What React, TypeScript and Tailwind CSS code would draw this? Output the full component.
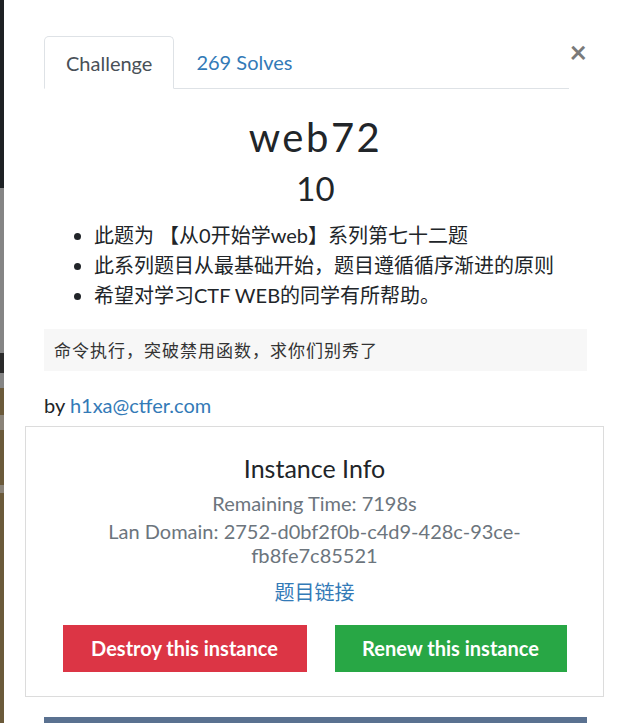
const lato = { fontFamily: 'Lato, "Noto Sans CJK SC", sans-serif' }

const bullets = [
  '此题为 【从0开始学web】系列第七十二题',
  '此系列题目从最基础开始，题目遵循循序渐进的原则',
  '希望对学习CTF WEB的同学有所帮助。',
]

export default function App() {
  return (
    <div className="flex w-[625px] h-[723px] overflow-hidden bg-white" style={lato}>
      {/* page behind the modal */}
      <div className="flex flex-col w-[4px] shrink-0">
        <div className="h-[188px] bg-[#1e2124]" />
        <div className="h-[165px] bg-[#858585]" />
        <div className="h-[20px] bg-[#2a2a2a]" />
        <div className="h-[15px] bg-[#858585]" />
        <div className="h-[27px] bg-[#6b5a3a]" />
        <div className="h-[15px] bg-[#8a8378]" />
        <div className="h-[55px] bg-[#6b5a3a]" />
        <div className="h-[8px] bg-[#8a8378]" />
        <div className="flex-1 bg-[#6b5a3a]" />
      </div>

      <div className="flex-1 flex flex-col pl-[40px] pr-[38px] pt-[36px] text-[#212529]">
        {/* tabs */}
        <div className="flex items-start">
          <ul className="flex flex-1 border-b border-[#dee2e6] text-[20px]">
            <li className="-mb-px h-[53px] px-[21px] flex items-center border border-[#dee2e6] border-b-white rounded-t-[5px] bg-white text-[#495057]">
              Challenge
            </li>
            <li className="h-[52px] px-[22px] flex items-center text-[#337ab7]">269 Solves</li>
          </ul>
          <button className="w-[18px] text-[30px] leading-none font-bold text-[#7a7a7a] text-right">×</button>
        </div>

        {/* title */}
        <h2 className="mt-[22px] text-center text-[40px] leading-[52px] tracking-[2.5px] text-[#212529]">web72</h2>
        <h3 className="mt-[3px] text-center text-[33px] leading-[44px]">10</h3>

        {/* description */}
        <ul className="mt-[10px] pl-[50px] list-disc text-[20px] leading-[30px]">
          {bullets.map(b => (
            <li key={b}>{b}</li>
          ))}
        </ul>

        <pre
          className="mt-[19px] h-[42px] px-[10px] flex items-center bg-[#f7f7f7] text-[17px] tracking-[1px] text-[#333]"
          style={{ fontFamily: '"Noto Sans CJK SC", sans-serif' }}
        >
          命令执行，突破禁用函数，求你们别秀了
        </pre>

        <p className="mt-[20px] text-[20px] leading-[28px]">
          by <a className="text-[#337ab7]">h1xa@ctfer.com</a>
        </p>

        {/* instance box */}
        <div className="mt-[7px] -ml-[19px] -mr-[17px] h-[272px] border border-[#dcdcdc] flex flex-col items-center pt-[26px]">
          <h4 className="text-[25px] leading-[30px] text-[#212529]">Instance Info</h4>
          <p className="mt-[8px] text-[20px] leading-[24px] text-[#6c757d]">Remaining Time: 7198s</p>
          <p className="mt-[4px] w-[430px] text-center text-[20px] leading-[24px] text-[#6c757d]">
            Lan Domain: 2752-d0bf2f0b-c4d9-428c-93ce-fb8fe7c85521
          </p>
          <a className="mt-[12px] text-[20px] leading-[26px] text-[#337ab7]">题目链接</a>
          <div className="mt-[20px] flex gap-[28px]">
            <button className="w-[244px] h-[47px] bg-[#dc3545] text-white font-bold text-[20px]">
              Destroy this instance
            </button>
            <button className="w-[232px] h-[47px] bg-[#28a745] text-white font-bold text-[20px]">
              Renew this instance
            </button>
          </div>
        </div>

        <div className="mt-[20px] h-[6px] bg-[#5a7190]" />
      </div>
    </div>
  )
}
